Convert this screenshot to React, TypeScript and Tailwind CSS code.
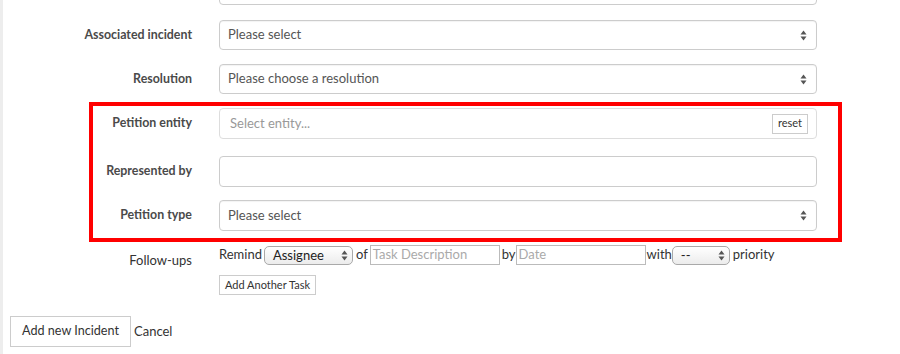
import React from "react";

const Arrows = () => (
  <svg width="7" height="11" viewBox="0 0 7 11" className="shrink-0">
    <path d="M3.5 0.5 L6.5 4.5 L0.5 4.5 Z" fill="#555" />
    <path d="M3.5 10.5 L6.5 6.5 L0.5 6.5 Z" fill="#555" />
  </svg>
);

const Label = ({ children, w }: { children: React.ReactNode; w: string }) => (
  <div className={`${w} shrink-0 text-right pr-[27px] text-[12.4px] font-bold text-[#4a4a4a]`}>{children}</div>
);

const SelectBox = ({ text, h = "h-[30px]" }: { text: string; h?: string }) => (
  <div className={`w-[598px] ${h} flex items-center justify-between rounded-[4px] border border-[#ccc] bg-white pl-[8px] pr-[9px] text-[13px] text-[#555] shadow-[inset_0_1px_1px_rgba(0,0,0,0.05)]`}>
    <span>{text}</span>
    <Arrows />
  </div>
);

const SmallSelect = ({ text, w }: { text: string; w: string }) => (
  <div className={`${w} h-[19px] flex items-center justify-between rounded-[5px] border border-[#a9a9a9] bg-gradient-to-b from-white to-[#ececec] pl-[8px] pr-[4px] text-[13px] text-[#222]`}>
    <span className="leading-none">{text}</span>
    <Arrows />
  </div>
);

export default function App() {
  return (
    <div className="w-[900px] h-[354px] overflow-hidden bg-white border-l-[3px] border-[#ededed]" style={{ fontFamily: "Lato, 'Liberation Sans', sans-serif" }}>
      <div className="-ml-[3px]">
        <div className="flex mt-[-25px]">
          <div className="w-[219px] shrink-0" />
          <div className="w-[598px] h-[30px] rounded-[4px] border border-[#ccc] bg-white" />
        </div>

        <div className="flex items-center mt-[15px]">
          <Label w="w-[219px]">Associated incident</Label>
          <SelectBox text="Please select" />
        </div>

        <div className="flex items-center mt-[14px]">
          <Label w="w-[219px]">Resolution</Label>
          <SelectBox text="Please choose a resolution" />
        </div>

        <div className="ml-[89px] mt-[8px] w-[753px] border-4 border-[#ff0000] pt-[2px] pb-[7px]">
          <div className="flex items-center">
            <Label w="w-[126px]">Petition entity</Label>
            <div className="w-[598px] h-[31px] flex items-center justify-between rounded-[4px] border border-[#ddd] bg-white pl-[10px] pr-[8px] text-[13px] text-[#999]">
              <span>Select entity...</span>
              <div className="h-[20px] w-[36px] flex items-center justify-center border border-[#ccc] text-[11px] text-[#333] bg-white">reset</div>
            </div>
          </div>
          <div className="flex items-center mt-[17px]">
            <Label w="w-[126px]">Represented by</Label>
            <div className="w-[598px] h-[31px] rounded-[4px] border border-[#ccc] bg-white" />
          </div>
          <div className="flex items-center mt-[13px]">
            <Label w="w-[126px]">Petition type</Label>
            <SelectBox text="Please select" h="h-[31px]" />
          </div>
        </div>

        <div className="flex mt-[3px]">
          <div className="w-[219px] shrink-0 pr-[27px] text-right pt-[6px] text-[13px] text-[#333]">Follow-ups</div>
          <div>
            <div className="flex items-center h-[20px] text-[13px] text-[#333]">
              <span className="mr-[2px]">Remind</span>
              <SmallSelect text="Assignee" w="w-[89px]" />
              <span className="ml-[3px] mr-[2px]">of</span>
              <div className="w-[130px] h-[20px] border border-[#bbb] px-[2px] flex items-center text-[#aaa]">Task Description</div>
              <span className="ml-[2px]">by</span>
              <div className="w-[130px] h-[20px] border border-[#bbb] px-[2px] flex items-center text-[#aaa]">Date</div>
              <span className="ml-[1px]">with</span>
              <SmallSelect text="--" w="w-[58px]" />
              <span className="ml-[3px]">priority</span>
            </div>
            <div className="mt-[10px] w-[97px] h-[20px] border border-[#ccc] bg-white flex items-center justify-center text-[11px] text-[#333]">Add Another Task</div>
          </div>
        </div>

        <div className="flex items-center mt-[21px] ml-[10px]">
          <div className="w-[121px] h-[31px] border border-[#ccc] bg-white flex items-center justify-center text-[12.6px] text-[#333]">Add new Incident</div>
          <span className="ml-[3px] text-[13px] text-[#333]">Cancel</span>
        </div>
      </div>
    </div>
  );
}
